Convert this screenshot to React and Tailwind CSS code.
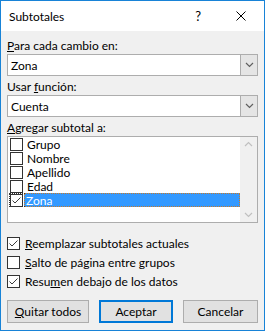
import React from 'react';

// Windows 10 "Subtotales" dialog
function CheckBox({ checked }) {
  return (
    <span className="w-[13px] h-[13px] border border-[#333333] bg-white flex items-center justify-center shrink-0">
      {checked && (
        <svg width="11" height="11" viewBox="0 0 11 11">
          <polyline points="1.5,5.5 4,8 9.5,2.5" fill="none" stroke="#3c3c3c" strokeWidth="1" />
        </svg>
      )}
    </span>
  );
}

function Chevron({ up = false, color = '#606060' }) {
  return (
    <svg width="9" height="6" viewBox="0 0 9 6">
      <polyline
        points={up ? '1,5 4.5,1.5 8,5' : '1,1 4.5,4.5 8,1'}
        fill="none"
        stroke={color}
        strokeWidth="1.2"
      />
    </svg>
  );
}

function Combo({ value }) {
  return (
    <div className="h-[22px] border border-[#adadad] bg-white flex">
      <span className="flex-1 pl-[3px] flex items-center">{value}</span>
      <span className="w-[17px] bg-[#e5e5e5] border-l border-[#adadad] flex items-center justify-center">
        <Chevron />
      </span>
    </div>
  );
}

const fields = [
  { name: 'Grupo', checked: false },
  { name: 'Nombre', checked: false },
  { name: 'Apellido', checked: false },
  { name: 'Edad', checked: false },
  { name: 'Zona', checked: true, selected: true },
];

function Option({ checked, children }) {
  return (
    <div className="h-[19px] flex items-center">
      <CheckBox checked={checked} />
      <span className="ml-[5px]">{children}</span>
    </div>
  );
}

export default function App() {
  return (
    <div className="w-[265px] h-[331px] border border-[#1883d7] bg-[#f0f0f0] text-[12px] leading-[15px] text-black font-['Lato','Liberation_Sans',sans-serif] flex flex-col overflow-hidden">
      {/* Title bar */}
      <div className="h-[30px] bg-white flex items-center pl-[8px] shrink-0">
        <span className="text-[12px]">Subtotales</span>
        <span className="ml-auto text-[13px] mr-[35px]">?</span>
        <svg width="10" height="10" viewBox="0 0 10 10" className="mr-[18px]">
          <line x1="0.5" y1="0.5" x2="9.5" y2="9.5" stroke="#000" strokeWidth="1" />
          <line x1="9.5" y1="0.5" x2="0.5" y2="9.5" stroke="#000" strokeWidth="1" />
        </svg>
      </div>

      <div className="px-[6px] pt-[7px] flex flex-col">
        <div className="h-[15px] mb-[1px]">
          <u>P</u>ara cada cambio en:
        </div>
        <Combo value="Zona" />

        <div className="h-[15px] mt-[3px] mb-[1px]">
          Usar <u>f</u>unción:
        </div>
        <Combo value="Cuenta" />

        <div className="h-[15px] mt-[3px] mb-[1px]">
          <u>A</u>gregar subtotal a:
        </div>
        <div className="h-[87px] border border-[#adadad] bg-white flex">
          <div className="flex-1 flex flex-col">
            {fields.map((f) => (
              <div key={f.name} className="relative h-[14px] flex items-center pl-[2px]">
                <CheckBox checked={f.checked} />
                {f.selected ? (
                  <>
                    <span className="absolute left-[1px] top-0 h-[14px] w-[16px] border border-r-0 border-dotted border-[#333]" />
                    <span className="ml-[1px] flex-1 h-[14px] bg-[#3399ff] text-white pl-[1px] border border-dotted border-[#c87a2a] flex items-center">
                      {f.name}
                    </span>
                  </>
                ) : (
                  <span className="ml-[4px]">{f.name}</span>
                )}
              </div>
            ))}
          </div>
          <div className="w-[17px] bg-[#f0f0f0] flex flex-col items-center justify-between py-[4px]">
            <Chevron up color="#c0c0c0" />
            <Chevron color="#c0c0c0" />
          </div>
        </div>

        <div className="mt-[11px]">
          <Option checked>
            <u>R</u>eemplazar subtotales actuales
          </Option>
          <Option>
            <u>S</u>alto de página entre grupos
          </Option>
          <Option checked>
            Resu<u>m</u>en debajo de los datos
          </Option>
        </div>

        <div className="mt-[9px] flex">
          <button className="w-[82px] h-[23px] bg-[#e1e1e1] border border-[#adadad]">
            <u>Q</u>uitar todos
          </button>
          <button className="ml-[10px] w-[74px] h-[23px] bg-[#e1e1e1] border-2 border-[#0078d7]">
            Aceptar
          </button>
          <button className="ml-[10px] w-[75px] h-[23px] bg-[#e1e1e1] border border-[#adadad]">
            Cancelar
          </button>
        </div>
      </div>
    </div>
  );
}
